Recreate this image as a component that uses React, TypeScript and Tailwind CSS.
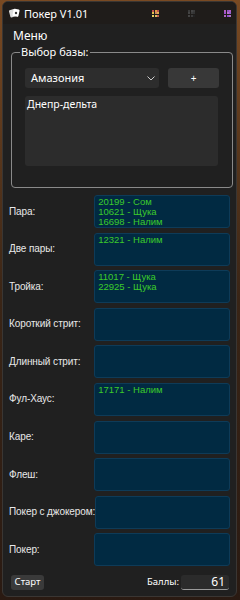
import React from "react";

// Покер V1.01 — WinUI-ish dark window, recreated at 240x600.

const ROWS: { label: string; items: string[] }[] = [
  { label: "Пара:", items: ["20199 - Сом", "10621 - Щука", "16698 - Налим"] },
  { label: "Две пары:", items: ["12321 - Налим"] },
  { label: "Тройка:", items: ["11017 - Щука", "22925 - Щука"] },
  { label: "Короткий стрит:", items: [] },
  { label: "Длинный стрит:", items: [] },
  { label: "Фул-Хаус:", items: ["17171 - Налим"] },
  { label: "Каре:", items: [] },
  { label: "Флеш:", items: [] },
  { label: "Покер с джокером:", items: [] },
  { label: "Покер:", items: [] },
];

function DotGrid({ colors }: { colors: string[] }) {
  // 3x3 grid of tiny squares, like the caption buttons in the shot
  return (
    <div className="grid grid-cols-3 gap-[0.5px]">
      {colors.map((c, i) => (
        <span key={i} className="h-[2px] w-[2px]" style={{ background: c }} />
      ))}
    </div>
  );
}

const warm = ["#c0504d", "#e0a040", "#c0504d", "#e0c050", "#d08060", "#e0b050", "#e8d060", "#e0c060", "#c06050"];
const dim = ["#3a3a3a", "#444", "#3a3a3a", "#444", "#3a3a3a", "#333", "#444", "#3a3a3a", "#222"];
const purple = ["#b060c0", "#9050c0", "#b060c0", "#a050d0", "#c070d0", "#9060d0", "#b060c0", "#9050d0", "#b070c0"];

export default function App() {
  return (
    <div className="h-[600px] w-[240px] bg-gradient-to-b from-[#7a4a22] via-[#3a2516] to-[#2a1a12] pl-[2px] pr-[3px] pt-px font-['Noto_Sans',sans-serif] text-white">
      <div className="flex h-[596px] flex-col overflow-hidden rounded-[6px] border border-[#3a3633] bg-[#202020]">
        {/* title bar */}
        <div className="flex h-[22px] shrink-0 items-center bg-[#1f1c1a] pl-[6px]">
          <svg width="11" height="10" viewBox="0 0 11 10" className="mr-[4px]">
            <rect x="0.5" y="1.5" width="6" height="7.5" rx="1" fill="#ddd" transform="rotate(-15 3.5 5)" />
            <rect x="4" y="1" width="6" height="7.5" rx="1" fill="#fff" transform="rotate(12 7 5)" />
            <circle cx="7" cy="5" r="1.2" fill="#333" />
          </svg>
          <span className="text-[11px] leading-none">Покер V1.01</span>
          <div className="ml-auto mr-[5px] flex items-center gap-[29px]">
            <DotGrid colors={warm} />
            <DotGrid colors={dim} />
            <DotGrid colors={purple} />
          </div>
        </div>

        {/* menu */}
        <div className="px-[10px] pt-[3px] text-[12px] leading-[18px]">Меню</div>

        {/* group box */}
        <fieldset className="mx-[8px] mt-[1px] h-[142px] rounded-[4px] border border-[#8a8a8a] px-[13px] pb-0 pt-[10px]">
          <legend className="ml-[-5px] px-[1px] text-[11px] leading-[12px]">Выбор базы:</legend>
          <div className="flex items-center gap-[9px]">
            <div className="flex h-[20px] w-[134px] items-center justify-between rounded-[3px] bg-[#2d2d2d] pl-[6px] pr-[4px] text-[11px]">
              <span>Амазония</span>
              <svg width="8" height="5" viewBox="0 0 8 5">
                <path d="M0.5 0.5 L4 4 L7.5 0.5" stroke="#ccc" fill="none" strokeWidth="1" />
              </svg>
            </div>
            <div className="flex h-[20px] w-[51px] items-center justify-center rounded-[3px] bg-[#383838] text-[10px]">+</div>
          </div>
          <div className="mt-[8px] h-[70px] w-[193px] rounded-[3px] bg-[#2c2c2c] px-[2px] pt-[2px] text-[10.5px] leading-[13px]">
            Днепр-дельта
          </div>
        </fieldset>

        {/* hand rows */}
        <div className="mt-[7px] flex flex-col gap-[4.6px] pl-[6px] pr-[6px]">
          {ROWS.map((r) => (
            <div key={r.label} className="flex items-center">
              <div className="w-[86px] whitespace-nowrap font-['Liberation_Sans',sans-serif] text-[10px] leading-none tracking-[-0.1px] text-[#e8e8e8]">
                {r.label}
              </div>
              <div className="h-[33px] w-[137px] rounded-[3px] border border-[#0e3b58] bg-[#012a42] px-[3px] pt-[1px] font-['Liberation_Sans',sans-serif] text-[9.5px] leading-[10px] text-[#3ccc2a]">
                {r.items.map((it) => (
                  <div key={it}>{it}</div>
                ))}
              </div>
            </div>
          ))}
        </div>

        {/* footer */}
        <div className="mt-auto mb-[6px] flex items-center pl-[8px] pr-[7px]">
          <div className="flex h-[15px] w-[33px] items-center justify-center rounded-[3px] bg-[#3a3a3a] text-[9.5px]">Старт</div>
          <span className="ml-auto mr-[2px] text-[9.5px]">Баллы:</span>
          <div className="flex h-[15px] w-[48px] items-center justify-end rounded-[3px] border-b border-[#9a9a9a] bg-[#2b2b2b] pr-[4px] text-[12px]">
            61
          </div>
        </div>
      </div>
    </div>
  );
}
